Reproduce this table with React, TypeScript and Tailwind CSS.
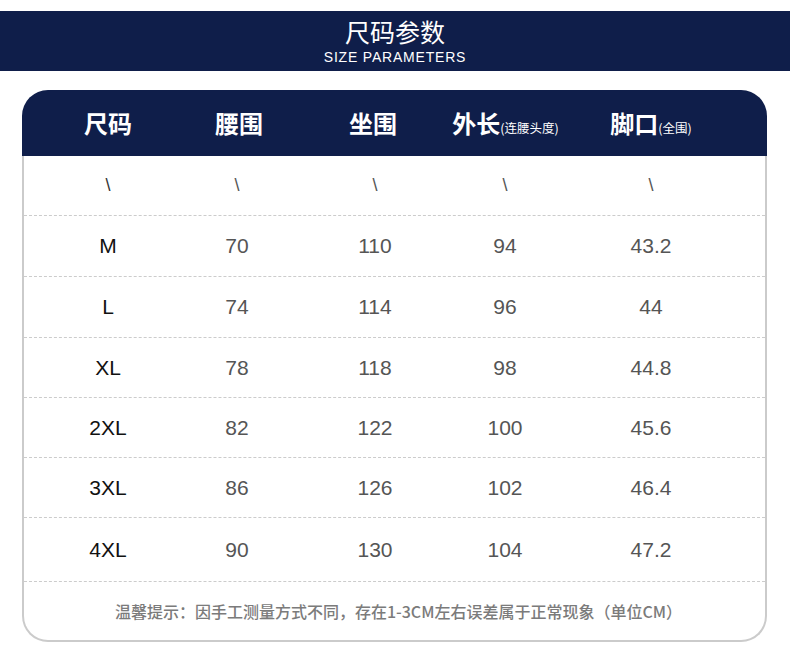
const rows = [
  ['\\', '\\', '\\', '\\', '\\'],
  ['M', '70', '110', '94', '43.2'],
  ['L', '74', '114', '96', '44'],
  ['XL', '78', '118', '98', '44.8'],
  ['2XL', '82', '122', '100', '45.6'],
  ['3XL', '86', '126', '102', '46.4'],
  ['4XL', '90', '130', '104', '47.2'],
];

const rowHeights = ['h-[60px]', 'h-[61px]', 'h-[61px]', 'h-[60px]', 'h-[60px]', 'h-[60px]', 'h-[64px]'];
// data cells sit a little left of the header labels in the first two columns
const cellShift = ['pr-[4px]', 'pr-[8px]', '', '', ''];

const cols = 'grid grid-cols-[132px_130px_138px_122px_170px] pl-[20px]';

export default function App() {
  return (
    <div className="w-[790px] h-[653px] bg-white pt-[11px] font-['Liberation_Sans','Noto_Sans_CJK_SC',sans-serif]">
      {/* banner */}
      <div className="h-[60px] bg-[#0f1e4a] flex flex-col items-center text-white">
        <div className="text-[25px] leading-none mt-[8px] font-['Noto_Sans_CJK_SC',sans-serif]">尺码参数</div>
        <div className="text-[14px] leading-none mt-[6px] tracking-[0.8px]">SIZE PARAMETERS</div>
      </div>

      {/* table card */}
      <div className="ml-[22px] w-[745px] mt-[19px]">
        <div className={`${cols} h-[66px] items-center bg-[#0f1e4a] rounded-t-[26px] text-white font-['Noto_Sans_CJK_SC',sans-serif] font-bold`}>
          <div className="text-center text-[24px]">尺码</div>
          <div className="text-center text-[24px]">腰围</div>
          <div className="text-center text-[24px]">坐围</div>
          <div className="text-center text-[24px] whitespace-nowrap pl-[5px]">
            外长<span className="text-[12.5px] font-normal">(连腰头度)</span>
          </div>
          <div className="text-center text-[24px] whitespace-nowrap pl-[4px]">
            脚口<span className="text-[12.5px] font-normal">(全围)</span>
          </div>
        </div>

        <div className="border-x-2 border-b-2 border-[#cbcbcb] rounded-b-[26px]">
          {rows.map((r, i) => (
            <div
              key={i}
              className={`${cols} ${rowHeights[i]} items-center border-b border-dashed border-[#cccccc] text-[21px]`}
            >
              {r.map((v, j) => (
                <div
                  key={j}
                  className={`text-center ${cellShift[j]} ${j === 0 ? 'text-[#111]' : 'text-[#555]'} ${i === 0 ? 'text-[18px] font-light text-[#333]' : ''}`}
                >
                  {v}
                </div>
              ))}
            </div>
          ))}
          <div className="h-[58px] flex items-center justify-center pl-[8px] text-[16px] text-[#7b7b7b] font-medium font-['Noto_Sans_CJK_SC',sans-serif]">
            温馨提示：因手工测量方式不同，存在1-3CM左右误差属于正常现象（单位CM）
          </div>
        </div>
      </div>
    </div>
  );
}
